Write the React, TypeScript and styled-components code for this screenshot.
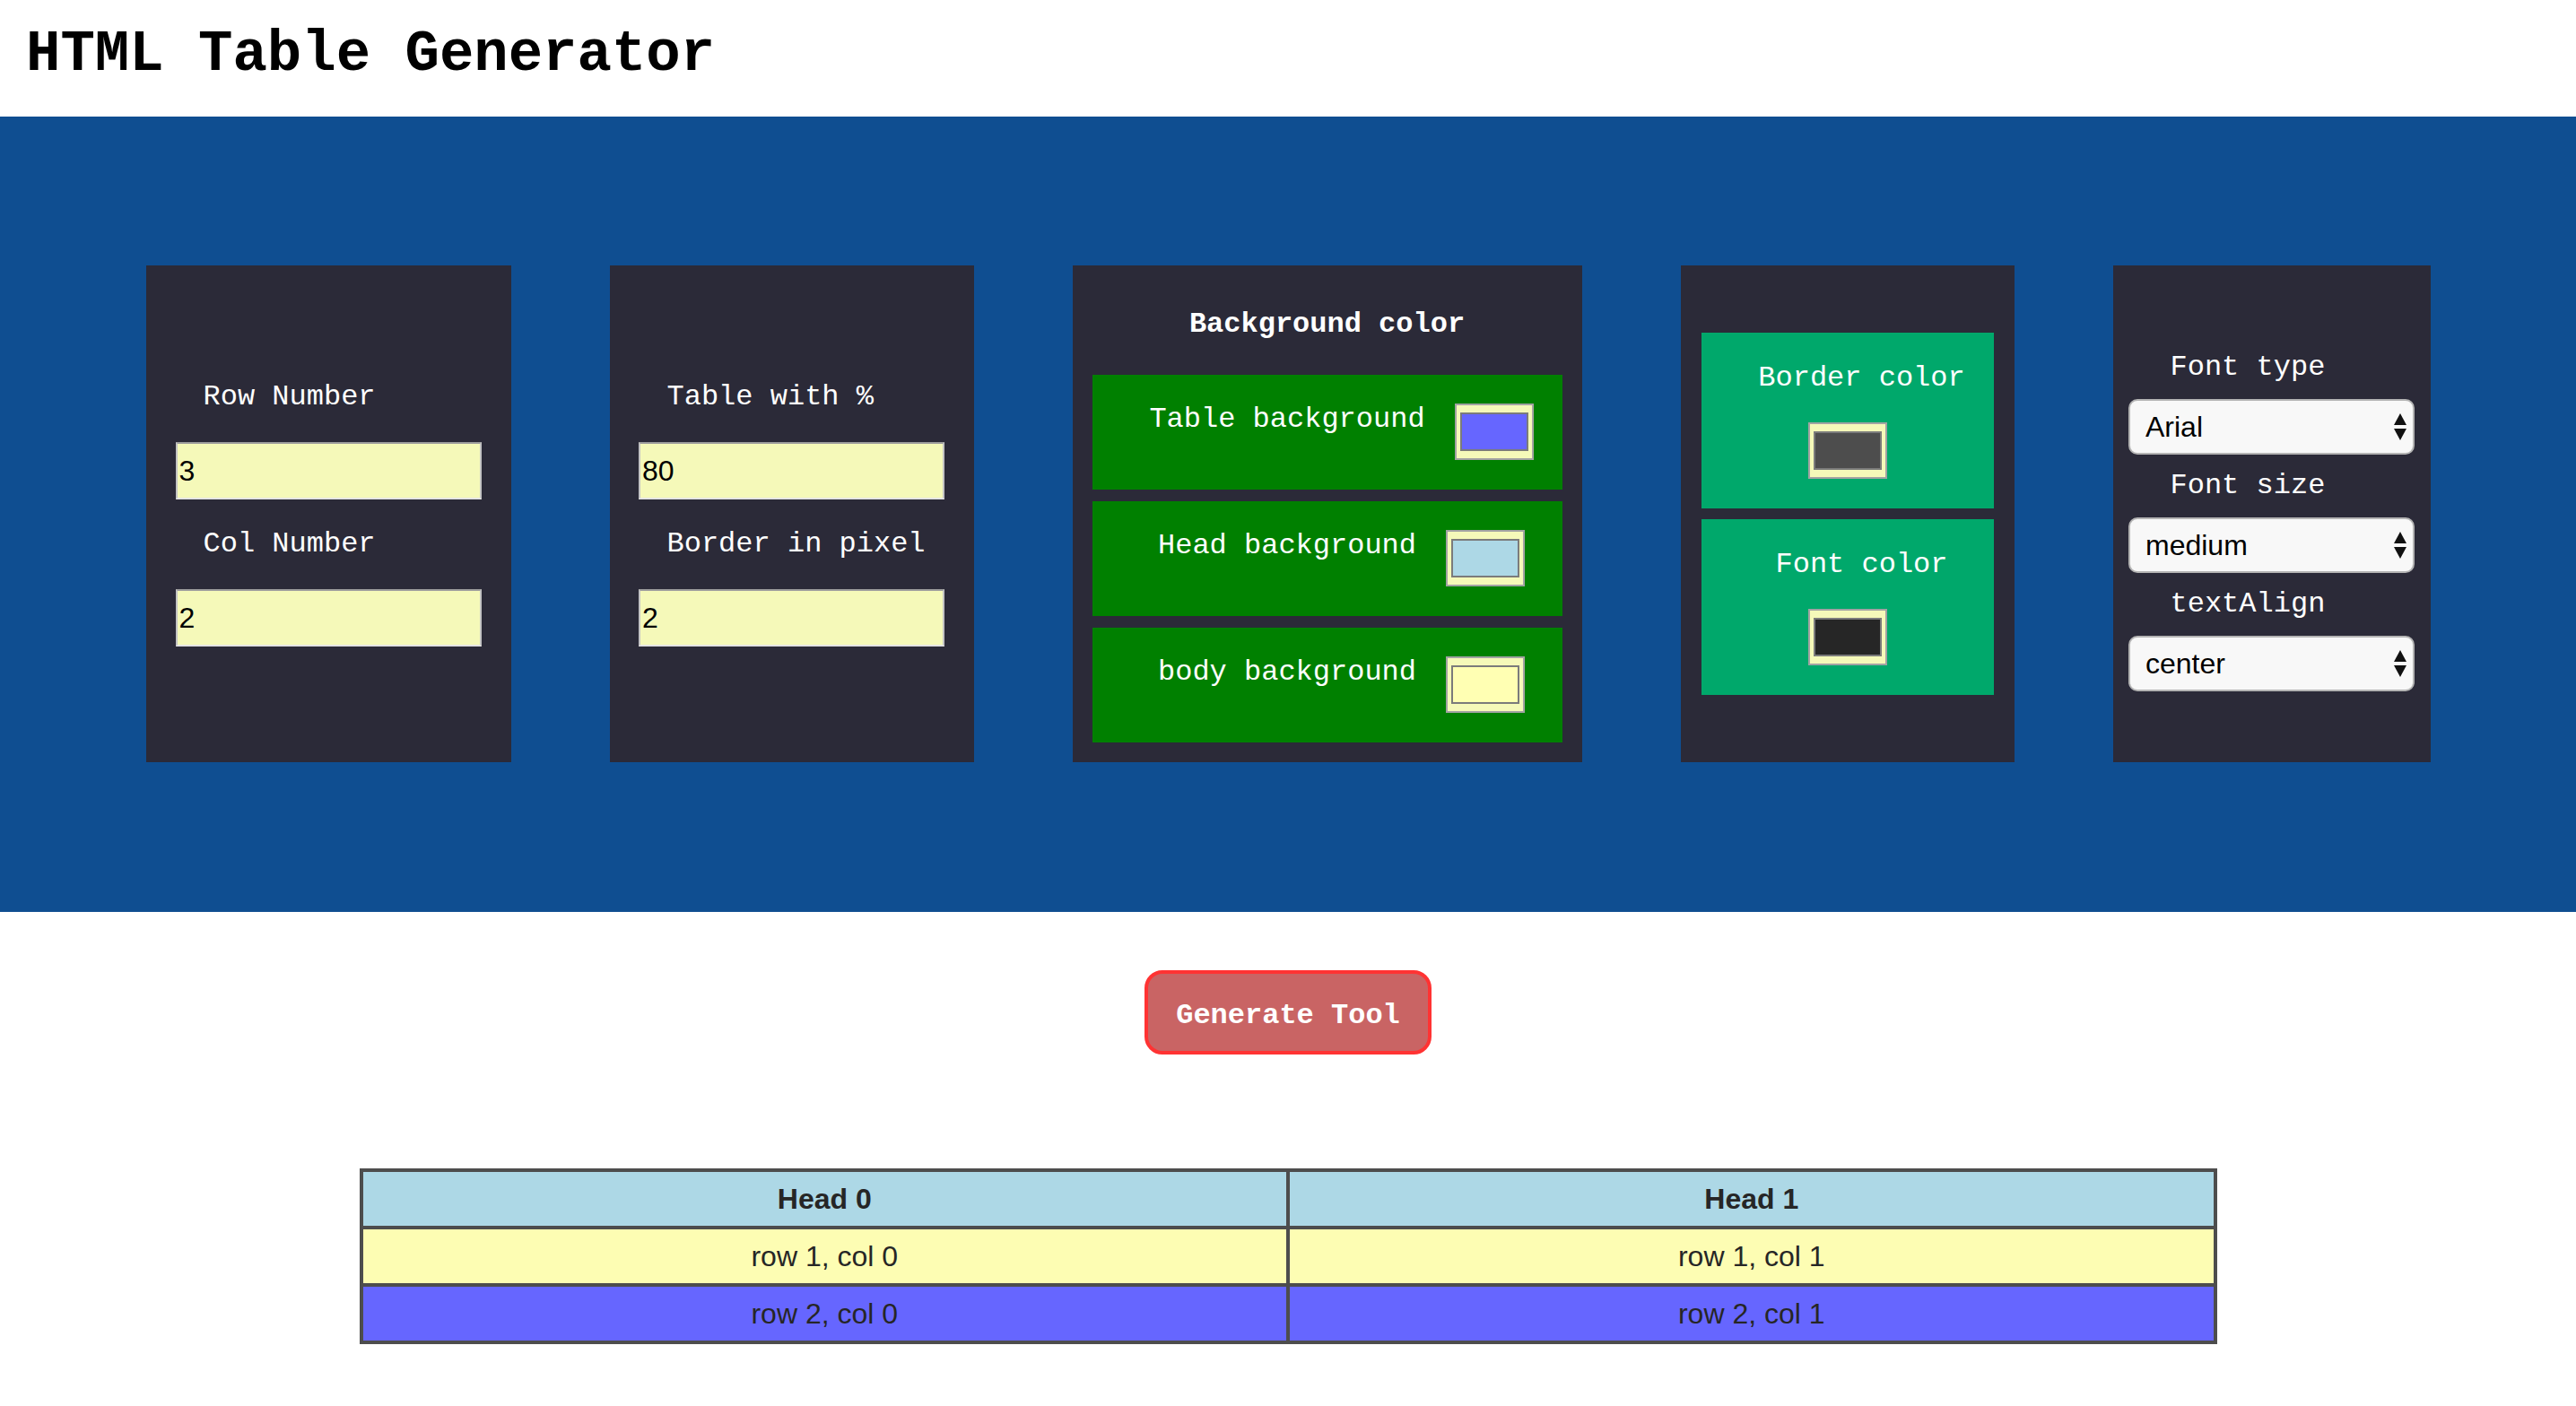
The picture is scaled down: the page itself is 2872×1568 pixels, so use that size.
import React from 'react';
import styled, { createGlobalStyle } from 'styled-components';

interface PanelProps {
  width: number;
  offsetTop?: number;
}

interface SwatchProps {
  color: string;
}

const GlobalStyle = createGlobalStyle`
  html,
  body {
    margin: 0;
    padding: 0;
    background-color: #ffffff;
  }
  body {
    font-family: 'Liberation Mono', 'Courier New', monospace;
  }
`;

const Page = styled.div`
  width: 100%;
  min-height: 100vh;
  display: flex;
  flex-direction: column;
`;

const Header = styled.header`
  height: 130px;
  padding-left: 29px;
  box-sizing: border-box;
`;

const Title = styled.h1`
  margin: 0;
  padding-top: 29px;
  font-family: 'Liberation Mono', 'Courier New', monospace;
  font-size: 64px;
  line-height: 64px;
  font-weight: bold;
  color: #000000;
`;

const Controls = styled.section`
  background-color: #0f4e91;
  padding: 166px 0 167px;
  display: flex;
  justify-content: center;
  gap: 110px;
  align-items: stretch;
`;

const Panel = styled.div<PanelProps>`
  width: ${(props) => props.width}px;
  background-color: #2b2a38;
  box-sizing: border-box;
  display: flex;
  flex-direction: column;
  justify-content: center;
  padding-top: ${(props) => props.offsetTop || 0}px;
`;

const BgPanel = styled(Panel)`
  justify-content: flex-start;
  padding: 22px;
`;

const Label = styled.label`
  display: block;
  padding-left: 64px;
  font-size: 32px;
  line-height: 36px;
  color: #ffffff;
  white-space: nowrap;
`;

const FieldLabel = styled(Label)`
  margin-bottom: 32px;
`;

const TextInput = styled.input`
  align-self: center;
  width: 341px;
  height: 64px;
  box-sizing: border-box;
  margin: 0 0 32px;
  padding: 0 0 0 2px;
  border: 2px solid;
  border-color: #9d9d9d #c4c4c4 #e4e4e4 #c4c4c4;
  background-color: #f5f9b9;
  font-family: 'Liberation Sans', Arial, sans-serif;
  font-size: 32px;
  color: #000000;
  outline: none;
  &:last-child {
    margin-bottom: 0;
  }
`;

const PanelTitle = styled.h4`
  margin: 26px 0 38px;
  font-size: 32px;
  line-height: 36px;
  font-weight: bold;
  color: #ffffff;
  text-align: center;
`;

const BgList = styled.div`
  display: flex;
  flex-direction: column;
  gap: 13px;
`;

const ColorRow = styled.div`
  background-color: #008000;
  padding: 32px 0 33px;
  display: flex;
  justify-content: center;
  align-items: flex-start;
`;

const RowLabel = styled.span`
  margin: 0 33px 0 32px;
  font-size: 32px;
  line-height: 36px;
  color: #ffffff;
  white-space: nowrap;
`;

const Swatch = styled.div<SwatchProps>`
  width: 88px;
  height: 63px;
  flex-shrink: 0;
  box-sizing: border-box;
  padding: 8px 4px;
  border: 2px solid #a3a3a3;
  background-color: #f5f9b9;
  display: flex;
  &::after {
    content: '';
    flex: 1;
    border: 2px solid #7b7b7b;
    background-color: ${(props) => props.color};
  }
`;

const ColorStack = styled.div`
  align-self: center;
  width: 326px;
  background-color: #00a86b;
  padding: 33px 0;
  display: flex;
  flex-direction: column;
  align-items: center;
  & + & {
    margin-top: 12px;
  }
`;

const StackLabel = styled.span`
  margin: 0 0 31px 32px;
  font-size: 32px;
  line-height: 36px;
  color: #ffffff;
  white-space: nowrap;
`;

const SelectLabel = styled(Label)`
  margin-bottom: 17px;
`;

const SelectWrap = styled.div`
  position: relative;
  align-self: center;
  width: 319px;
  height: 62px;
  margin-bottom: 17px;
  &:last-child {
    margin-bottom: 0;
  }
`;

const Select = styled.select`
  appearance: none;
  width: 100%;
  height: 100%;
  box-sizing: border-box;
  margin: 0;
  padding: 0 0 0 17px;
  border: 2px solid #b4b4b4;
  border-radius: 10px;
  background-color: #f8f8f8;
  font-family: 'Liberation Sans', Arial, sans-serif;
  font-size: 32px;
  color: #000000;
  outline: none;
`;

const Arrows = styled.svg`
  position: absolute;
  right: 8px;
  top: 16px;
  pointer-events: none;
`;

const Actions = styled.div`
  display: flex;
  justify-content: center;
  padding-top: 65px;
`;

const GenerateButton = styled.button`
  width: 320px;
  height: 94px;
  box-sizing: border-box;
  padding: 6px 0 0;
  border: 4px solid #ff3333;
  border-radius: 20px;
  background-color: #c96464;
  color: #ffffff;
  font-family: 'Liberation Mono', 'Courier New', monospace;
  font-size: 32px;
  font-weight: bold;
  cursor: pointer;
`;

const Preview = styled.div`
  display: flex;
  justify-content: center;
  padding-top: 127px;
`;

const Table = styled.table`
  width: 2071px;
  border-collapse: collapse;
  font-family: 'Liberation Sans', Arial, sans-serif;
  font-size: 32px;
  color: #262626;
  text-align: center;
`;

const Row = styled.tr<SwatchProps>`
  background-color: ${(props) => props.color};
`;

const HeadCell = styled.th`
  width: 50%;
  border: 4px solid #4d4d4d;
  padding: 12px 0;
  line-height: 36px;
  font-weight: bold;
`;

const Cell = styled.td`
  border: 4px solid #4d4d4d;
  padding: 12px 0;
  line-height: 36px;
`;

const SelectArrows: React.FC = () => (
  <Arrows width="16" height="31" viewBox="0 0 16 31">
    <polygon points="8,0 15,13 1,13" fill="#111111" />
    <polygon points="1,17 15,17 8,30" fill="#111111" />
  </Arrows>
);

const bgRows = [
  { label: 'Table background', color: '#6666ff' },
  { label: 'Head background', color: '#add8e6' },
  { label: 'body background', color: '#ffffb3' },
];

const selects = [
  { label: 'Font type', value: 'Arial', options: ['Arial', 'Verdana', 'Courier New', 'Georgia'] },
  { label: 'Font size', value: 'medium', options: ['small', 'medium', 'large', 'x-large'] },
  { label: 'textAlign', value: 'center', options: ['left', 'center', 'right'] },
];

const bodyRows = [
  { color: '#fdfdb3', cells: ['row 1, col 0', 'row 1, col 1'] },
  { color: '#6666ff', cells: ['row 2, col 0', 'row 2, col 1'] },
];

const App: React.FC = () => {
  return (
    <Page>
      <GlobalStyle />
      <Header>
        <Title>HTML Table Generator</Title>
      </Header>
      <Controls>
        <Panel width={407}>
          <FieldLabel>Row Number</FieldLabel>
          <TextInput type="text" value="3" readOnly />
          <FieldLabel>Col Number</FieldLabel>
          <TextInput type="text" value="2" readOnly />
        </Panel>
        <Panel width={406}>
          <FieldLabel>Table with %</FieldLabel>
          <TextInput type="text" value="80" readOnly />
          <FieldLabel>Border in pixel</FieldLabel>
          <TextInput type="text" value="2" readOnly />
        </Panel>
        <BgPanel width={568}>
          <PanelTitle>Background color</PanelTitle>
          <BgList>
            {bgRows.map((row) => (
              <ColorRow key={row.label}>
                <RowLabel>{row.label}</RowLabel>
                <Swatch color={row.color} />
              </ColorRow>
            ))}
          </BgList>
        </BgPanel>
        <Panel width={372}>
          <ColorStack>
            <StackLabel>Border color</StackLabel>
            <Swatch color="#4d4d4d" />
          </ColorStack>
          <ColorStack>
            <StackLabel>Font color</StackLabel>
            <Swatch color="#262626" />
          </ColorStack>
        </Panel>
        <Panel width={354} offsetTop={17}>
          {selects.map((item) => (
            <React.Fragment key={item.label}>
              <SelectLabel>{item.label}</SelectLabel>
              <SelectWrap>
                <Select defaultValue={item.value}>
                  {item.options.map((opt) => (
                    <option key={opt} value={opt}>
                      {opt}
                    </option>
                  ))}
                </Select>
                <SelectArrows />
              </SelectWrap>
            </React.Fragment>
          ))}
        </Panel>
      </Controls>
      <Actions>
        <GenerateButton>Generate Tool</GenerateButton>
      </Actions>
      <Preview>
        <Table>
          <thead>
            <Row color="#add8e6">
              <HeadCell>Head 0</HeadCell>
              <HeadCell>Head 1</HeadCell>
            </Row>
          </thead>
          <tbody>
            {bodyRows.map((row) => (
              <Row key={row.cells[0]} color={row.color}>
                {row.cells.map((cell) => (
                  <Cell key={cell}>{cell}</Cell>
                ))}
              </Row>
            ))}
          </tbody>
        </Table>
      </Preview>
    </Page>
  );
};

export default App;
